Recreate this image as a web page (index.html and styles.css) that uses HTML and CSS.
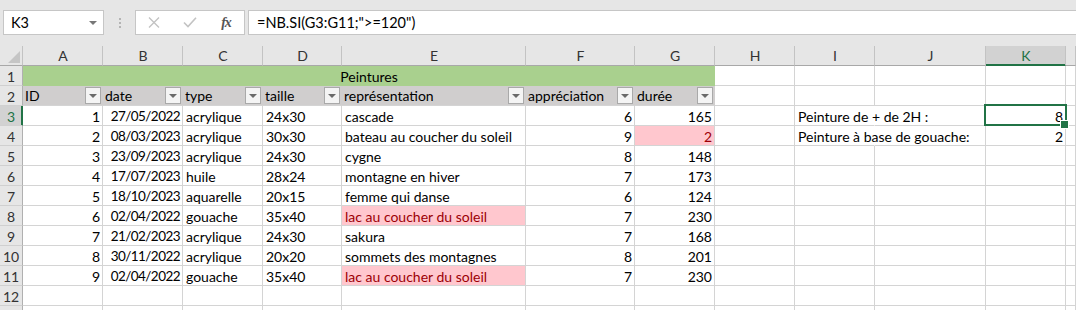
FILE: index.html
```html
<!DOCTYPE html>
<html lang="fr">
  <head>
    <meta charset="UTF-8" />
    <meta name="viewport" content="width=device-width, initial-scale=1.0" />
    <title>Peintures</title>
    <link rel="stylesheet" href="styles.css">
  </head>
  <body>
    <div class="toolbar">
      <div class="namebox">
        <span>K3</span>
        <span class="caret"></span>
      </div>
      <div class="grip"><i></i><i></i><i></i></div>
      <div class="fxbuttons">
        <span class="slot">
          <svg width="12" height="11" viewBox="0 0 12 11"><path d="M1 0.5 L11 10.5 M11 0.5 L1 10.5" stroke="#c3c3c3" stroke-width="1.4" fill="none"/></svg>
        </span>
        <span class="slot">
          <svg width="14" height="11" viewBox="0 0 14 11"><path d="M1 5.5 L5 9.5 L13 0.8" stroke="#c3c3c3" stroke-width="1.6" fill="none"/></svg>
        </span>
        <span class="slot fx">fx</span>
      </div>
      <div class="formula">=NB.SI(G3:G11;"&gt;=120")</div>
    </div>

    <table class="sheet">
      <colgroup>
        <col style="width:23px">
        <col style="width:80px">
        <col style="width:80px">
        <col style="width:80px">
        <col style="width:79px">
        <col style="width:184px">
        <col style="width:109px">
        <col style="width:80px">
        <col style="width:80px">
        <col style="width:80px">
        <col style="width:111px">
        <col style="width:80px">
        <col style="width:10px">
      </colgroup>
      <tr class="cols">
        <th class="corner"><span class="tri"></span></th>
        <th>A</th><th>B</th><th>C</th><th>D</th><th>E</th><th>F</th><th>G</th>
        <th>H</th><th>I</th><th>J</th><th class="sel">K</th><th></th>
      </tr>
      <tr>
        <th class="rn">1</th>
        <td colspan="7" class="title">Peintures</td>
        <td></td><td></td><td></td><td></td><td></td>
      </tr>
      <tr>
        <th class="rn">2</th>
        <td class="hd"><div class="hcell"><span>ID</span><span class="filter"></span></div></td>
        <td class="hd"><div class="hcell"><span>date</span><span class="filter"></span></div></td>
        <td class="hd"><div class="hcell"><span>type</span><span class="filter"></span></div></td>
        <td class="hd"><div class="hcell"><span>taille</span><span class="filter"></span></div></td>
        <td class="hd"><div class="hcell"><span>représentation</span><span class="filter"></span></div></td>
        <td class="hd"><div class="hcell"><span>appréciation</span><span class="filter"></span></div></td>
        <td class="hd"><div class="hcell"><span>durée</span><span class="filter"></span></div></td>
        <td></td><td></td><td></td><td></td><td></td>
      </tr>
      <tr>
        <th class="rn sel">3</th>
        <td class="num">1</td><td class="num date">27/05/2022</td><td>acrylique</td><td>24x30</td>
        <td>cascade</td><td class="num">6</td><td class="num">165</td>
        <td></td><td class="spill">Peinture de + de 2H :</td><td></td><td class="num active">8</td><td></td>
      </tr>
      <tr>
        <th class="rn">4</th>
        <td class="num">2</td><td class="num date">08/03/2023</td><td>acrylique</td><td>30x30</td>
        <td>bateau au coucher du soleil</td><td class="num">9</td><td class="num bad">2</td>
        <td></td><td class="spill">Peinture à base de gouache:</td><td></td><td class="num">2</td><td></td>
      </tr>
      <tr>
        <th class="rn">5</th>
        <td class="num">3</td><td class="num date">23/09/2023</td><td>acrylique</td><td>24x30</td>
        <td>cygne</td><td class="num">8</td><td class="num">148</td>
        <td></td><td></td><td></td><td></td><td></td>
      </tr>
      <tr>
        <th class="rn">6</th>
        <td class="num">4</td><td class="num date">17/07/2023</td><td>huile</td><td>28x24</td>
        <td>montagne en hiver</td><td class="num">7</td><td class="num">173</td>
        <td></td><td></td><td></td><td></td><td></td>
      </tr>
      <tr>
        <th class="rn">7</th>
        <td class="num">5</td><td class="num date">18/10/2023</td><td>aquarelle</td><td>20x15</td>
        <td>femme qui danse</td><td class="num">6</td><td class="num">124</td>
        <td></td><td></td><td></td><td></td><td></td>
      </tr>
      <tr>
        <th class="rn">8</th>
        <td class="num">6</td><td class="num date">02/04/2022</td><td>gouache</td><td>35x40</td>
        <td class="bad">lac au coucher du soleil</td><td class="num">7</td><td class="num">230</td>
        <td></td><td></td><td></td><td></td><td></td>
      </tr>
      <tr>
        <th class="rn">9</th>
        <td class="num">7</td><td class="num date">21/02/2023</td><td>acrylique</td><td>24x30</td>
        <td>sakura</td><td class="num">7</td><td class="num">168</td>
        <td></td><td></td><td></td><td></td><td></td>
      </tr>
      <tr>
        <th class="rn">10</th>
        <td class="num">8</td><td class="num date">30/11/2022</td><td>acrylique</td><td>20x20</td>
        <td>sommets des montagnes</td><td class="num">8</td><td class="num">201</td>
        <td></td><td></td><td></td><td></td><td></td>
      </tr>
      <tr>
        <th class="rn">11</th>
        <td class="num">9</td><td class="num date">02/04/2022</td><td>gouache</td><td>35x40</td>
        <td class="bad">lac au coucher du soleil</td><td class="num">7</td><td class="num">230</td>
        <td></td><td></td><td></td><td></td><td></td>
      </tr>
      <tr>
        <th class="rn">12</th>
        <td></td><td></td><td></td><td></td><td></td><td></td><td></td>
        <td></td><td></td><td></td><td></td><td></td>
      </tr>
      <tr>
        <th class="rn"></th>
        <td></td><td></td><td></td><td></td><td></td><td></td><td></td>
        <td></td><td></td><td></td><td></td><td></td>
      </tr>
    </table>
  </body>
</html>
```

FILE: styles.css
```css
* {
  margin: 0;
  padding: 0;
  box-sizing: border-box;
}

html,
body {
  width: 1076px;
  height: 310px;
  overflow: hidden;
}

body {
  background: #ffffff;
  font-family: Lato, "Liberation Sans", sans-serif;
  font-size: 14px;
  color: #000;
}

/* barre de formule */
.toolbar {
  height: 46px;
  background: #e6e6e6;
  display: flex;
  align-items: flex-start;
  padding: 10px 0 0 3px;
  font-size: 14.5px;
}

.namebox {
  width: 101px;
  height: 25px;
  background: #fff;
  border: 1px solid #c6c6c6;
  display: flex;
  align-items: center;
  justify-content: space-between;
  padding: 0 6px 0 7px;
}

.caret {
  width: 0;
  height: 0;
  border-left: 4px solid transparent;
  border-right: 4px solid transparent;
  border-top: 4px solid #777;
}

.grip {
  width: 31px;
  height: 25px;
  display: flex;
  flex-direction: column;
  align-items: center;
  justify-content: center;
  gap: 2px;
}

.grip i {
  width: 2px;
  height: 2px;
  background: #b4b4b4;
}

.fxbuttons {
  width: 110px;
  height: 25px;
  background: #fff;
  border: 1px solid #c6c6c6;
  display: flex;
  margin-right: 3px;
}

.slot {
  width: 36px;
  display: flex;
  align-items: center;
  justify-content: center;
}

.fx {
  font-family: "Liberation Serif", serif;
  font-style: italic;
  font-weight: bold;
  font-size: 14px;
  color: #555;
  letter-spacing: -1px;
}

.formula {
  flex: 1;
  height: 25px;
  background: #fff;
  border: 1px solid #c6c6c6;
  border-right: none;
  padding-left: 8px;
  line-height: 23px;
}

/* feuille */
.sheet {
  border-spacing: 0;
  table-layout: fixed;
  width: 1076px;
}

.sheet tr {
  height: 20px;
}

.sheet td,
.sheet th {
  border-right: 1px solid #d4d4d4;
  border-bottom: 1px solid #d4d4d4;
  padding: 0 2px 0 3px;
  white-space: nowrap;
  font-weight: normal;
  text-align: left;
  line-height: 17px;
  vertical-align: bottom;
}

.cols th {
  background: #e6e6e6;
  border-right-color: #c3c3c3;
  border-bottom-color: #a8a8a8;
  text-align: center;
  color: #333;
  font-size: 14px;
  line-height: 18px;
}

.cols th.sel {
  background: #d2d2d2;
  color: #217346;
  border-bottom-color: #217346;
  box-shadow: inset 0 -1px 0 #217346;
}

.tri {
  display: block;
  width: 0;
  height: 0;
  margin: 3px 0 2px auto;
  border-left: 12px solid transparent;
  border-bottom: 12px solid #c5c5c5;
}

.rn {
  background: #e6e6e6;
  border-right-color: #b0b0b0 !important;
  border-bottom-color: #d0d0d0 !important;
  color: #333;
  text-align: center !important;
  padding: 0 !important;
}

.rn.sel {
  background: #d2d2d2;
  color: #217346;
  border-right-color: #217346 !important;
  box-shadow: inset -1px 0 0 #217346;
}

.title {
  background: #a9d08e;
  border-right-color: #a9d08e !important;
  border-bottom-color: #a9d08e !important;
  text-align: center !important;
}

.hd {
  background: #d0cece;
  border-right-color: #d0cece !important;
  padding: 0 1px 0 2px !important;
}

.hcell {
  display: flex;
  align-items: center;
  justify-content: space-between;
  height: 19px;
}

.filter {
  width: 16px;
  height: 17px;
  background: #f4f4f4;
  border: 1px solid #a9a9a9;
  display: flex;
  align-items: center;
  justify-content: center;
}

.filter::after {
  content: "";
  border-left: 4px solid transparent;
  border-right: 4px solid transparent;
  border-top: 4px solid #6a6a6a;
}

.num {
  text-align: right !important;
}

.date {
  font-size: 13.5px;
  letter-spacing: -0.55px;
}

.bad {
  background: #ffc7ce;
  color: #9c0006;
}

.spill {
  border-right-color: #fff !important;
}

.active {
  position: relative;
}

.active::after {
  content: "";
  position: absolute;
  left: -2px;
  top: -2px;
  right: -2px;
  bottom: -1px;
  border: 2px solid #217346;
}

.active::before {
  content: "";
  position: absolute;
  right: -4px;
  bottom: -4px;
  width: 7px;
  height: 7px;
  background: #217346;
  border: 1px solid #fff;
  z-index: 1;
}
```
